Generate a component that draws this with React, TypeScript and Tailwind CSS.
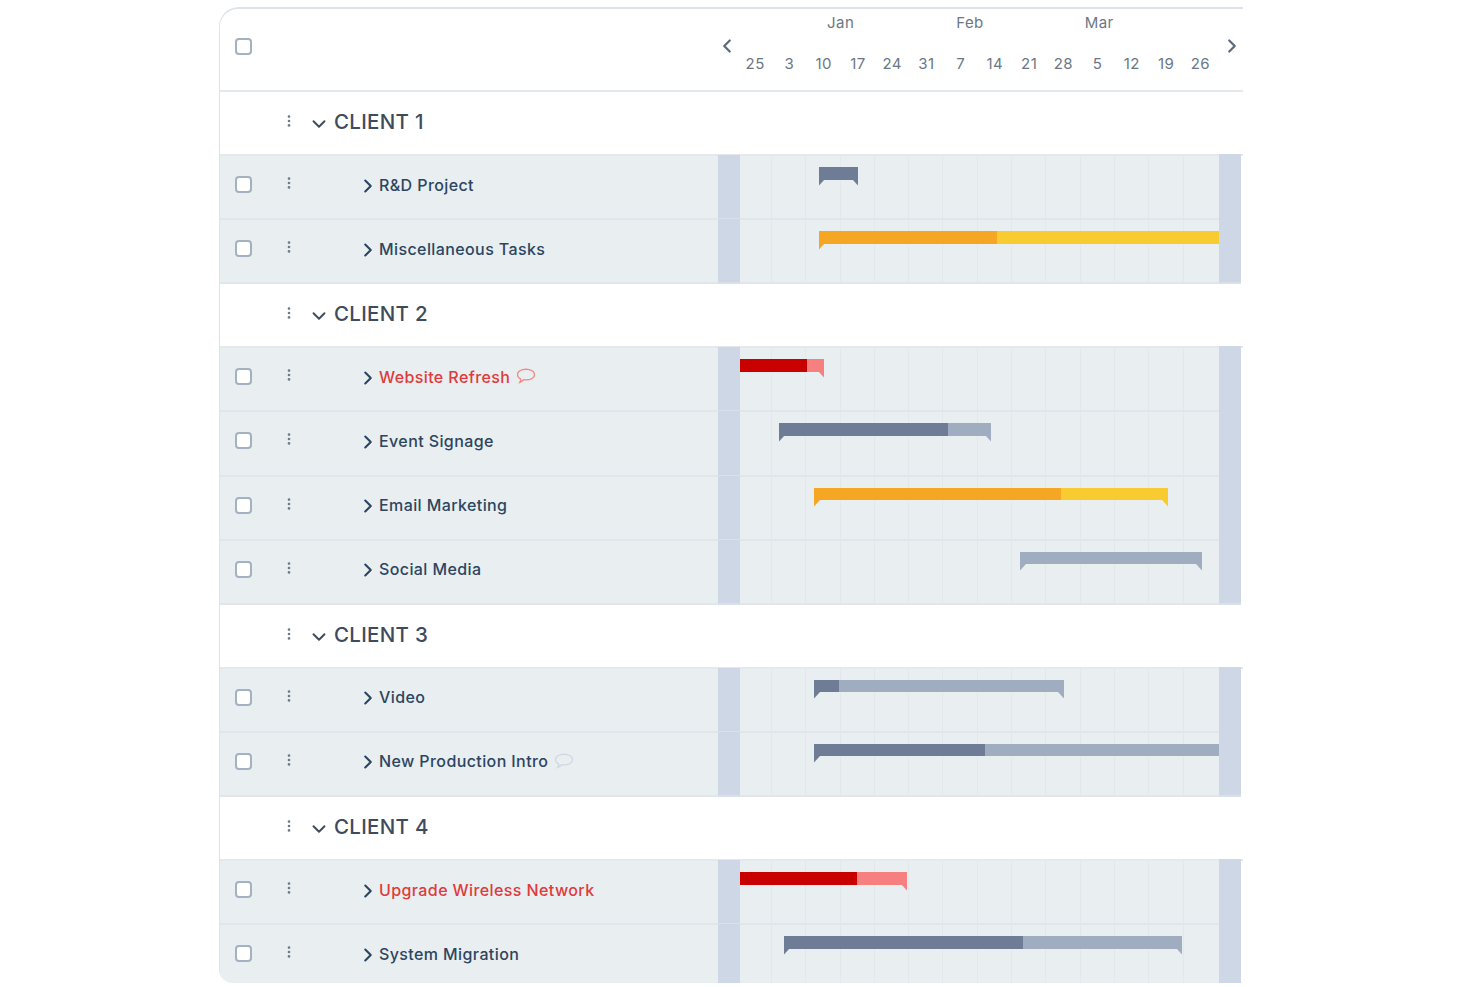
import React from "react";
import { ChevronDown, ChevronLeft, ChevronRight } from "lucide-react";

const DATES = ["25", "3", "10", "17", "24", "31", "7", "14", "21", "28", "5", "12", "19", "26"];
const MONTHS = ["Jan", "Feb", "Mar"];

// timeline column starts at x=740 in the page, segments are page x values
const T0 = 740;

const DARK = "#6e7c96";
const LIGHT = "#a0adc0";
const ORANGE = "#f5a623";
const YELLOW = "#f8cb30";
const RED = "#c80000";
const PINK = "#f67f7f";

interface Segment {
  from: number;
  to: number;
  color: string;
}

interface Task {
  name: string;
  late?: boolean;
  comment?: boolean;
  segments: Segment[];
  tipLeft?: boolean;
  tipRight?: boolean;
}

interface Client {
  name: string;
  tasks: Task[];
}

const CLIENTS: Client[] = [
  {
    name: "CLIENT 1",
    tasks: [
      { name: "R&D Project", segments: [{ from: 819, to: 858, color: DARK }], tipLeft: true, tipRight: true },
      {
        name: "Miscellaneous Tasks",
        segments: [
          { from: 819, to: 997, color: ORANGE },
          { from: 997, to: 1219, color: YELLOW },
        ],
        tipLeft: true,
      },
    ],
  },
  {
    name: "CLIENT 2",
    tasks: [
      {
        name: "Website Refresh",
        late: true,
        comment: true,
        segments: [
          { from: 740, to: 807, color: RED },
          { from: 807, to: 824, color: PINK },
        ],
        tipRight: true,
      },
      {
        name: "Event Signage",
        segments: [
          { from: 779, to: 948, color: DARK },
          { from: 948, to: 991, color: LIGHT },
        ],
        tipLeft: true,
        tipRight: true,
      },
      {
        name: "Email Marketing",
        segments: [
          { from: 814, to: 1061, color: ORANGE },
          { from: 1061, to: 1168, color: YELLOW },
        ],
        tipLeft: true,
        tipRight: true,
      },
      { name: "Social Media", segments: [{ from: 1020, to: 1202, color: LIGHT }], tipLeft: true, tipRight: true },
    ],
  },
  {
    name: "CLIENT 3",
    tasks: [
      {
        name: "Video",
        segments: [
          { from: 814, to: 839, color: DARK },
          { from: 839, to: 1064, color: LIGHT },
        ],
        tipLeft: true,
        tipRight: true,
      },
      {
        name: "New Production Intro",
        comment: true,
        segments: [
          { from: 814, to: 985, color: DARK },
          { from: 985, to: 1219, color: LIGHT },
        ],
        tipLeft: true,
      },
    ],
  },
  {
    name: "CLIENT 4",
    tasks: [
      {
        name: "Upgrade Wireless Network",
        late: true,
        segments: [
          { from: 740, to: 857, color: RED },
          { from: 857, to: 907, color: PINK },
        ],
        tipRight: true,
      },
      {
        name: "System Migration",
        segments: [
          { from: 784, to: 1023, color: DARK },
          { from: 1023, to: 1182, color: LIGHT },
        ],
        tipLeft: true,
        tipRight: true,
      },
    ],
  },
];

const Checkbox = () => (
  <span className="block w-[17px] h-[17px] rounded-[4px] border-2 border-[#a3b1c0] bg-white shrink-0" />
);

const Kebab = () => (
  <svg width="4" height="12" viewBox="0 0 4 12" className="block shrink-0" fill="#6f7b89">
    <circle cx="2" cy="1.6" r="1.3" />
    <circle cx="2" cy="6" r="1.3" />
    <circle cx="2" cy="10.4" r="1.3" />
  </svg>
);

const CommentIcon = ({ color }: { color: string }) => (
  <svg width="18" height="16" viewBox="1 1 16 13" fill="none" stroke={color} strokeWidth="1.2" className="block shrink-0">
    <path d="M9 1.5c4.3 0 7.600 2 7.600 4.800S13.300 11 9 11c-.8 0-1.500-.1-2.200-.2-.9 1-2 1.900-3.300 2.400.5-.9.8-1.900.8-3C2.700 9.300 1.400 7.900 1.400 6.300 1.400 3.500 4.700 1.500 9 1.500z" />
  </svg>
);

const GridLines = () => (
  <div className="absolute inset-0 flex">
    <div className="w-[32px] border-r border-[#e3e8ec] shrink-0" />
    {DATES.slice(1, 13).map((d, i) => (
      <div key={i} className="w-[34.300px] border-r border-[#e3e8ec] shrink-0" />
    ))}
  </div>
);

const Bar = ({ task }: { task: Task }) => {
  const first = task.segments[0];
  const last = task.segments[task.segments.length - 1];
  return (
    <>
      {task.segments.map((s, i) => (
        <div
          key={i}
          className="absolute top-[11px] h-[12.500px]"
          style={{ left: s.from - T0, width: s.to - s.from, backgroundColor: s.color }}
        />
      ))}
      {task.tipLeft && (
        <svg width="6" height="7" viewBox="0 0 6 7" className="absolute top-[23px]" style={{ left: first.from - T0 }}>
          <polygon points="0,0 6,0 0,6.500" fill={first.color} />
        </svg>
      )}
      {task.tipRight && (
        <svg width="6" height="7" viewBox="0 0 6 7" className="absolute top-[23px]" style={{ left: last.to - T0 - 6 }}>
          <polygon points="0,0 6,0 6,6.500" fill={last.color} />
        </svg>
      )}
    </>
  );
};

const ClientRow = ({ name }: { name: string }) => (
  <div className="flex h-[64.100px] bg-white border-b-2 border-[#e4e9ed]">
    <div className="w-[71px] pl-[67px] pt-[23px] shrink-0">
      <Kebab />
    </div>
    <div className="flex items-start pl-[17px] pt-[16px]">
      <ChevronDown size={22} strokeWidth={2.100} className="mt-[5px] text-[#3f4b5b] shrink-0" />
      <span className="ml-[4px] text-[20.500px] leading-[28px] font-medium tracking-[0.3px] text-[#3f4b5b]">
        {name}
      </span>
    </div>
  </div>
);

const TaskRow = ({ task }: { task: Task }) => (
  <div className="flex h-[64.100px] bg-[#e9eef1]">
    <div className="w-[498px] flex shrink-0 border-b-2 border-[#e0e6ec]">
      <div className="pl-[15px] pt-[20px] w-[67px] shrink-0">
        <Checkbox />
      </div>
      <div className="pt-[21px] w-[4px] shrink-0">
        <Kebab />
      </div>
      <div className="flex items-start pl-[66px] pt-[16.500px]">
        <ChevronRight size={22} strokeWidth={2.3} className="mt-[2px] text-[#2c4560] shrink-0" />
        <span
          className={`text-[16px] leading-[24px] font-medium tracking-[0.4px] ${
            task.late ? "text-[#e03a3a]" : "text-[#2c4560]"
          }`}
        >
          {task.name}
        </span>
        {task.comment && (
          <span className="ml-[7px] mt-[3.500px]">
            <CommentIcon color={task.late ? "#f08a85" : "#cfd8e1"} />
          </span>
        )}
      </div>
    </div>
    <div className="w-[22px] -mt-px bg-[#cdd7e6] border-b-2 border-[#d9e0ea] shrink-0" />
    <div className="relative w-[479px] shrink-0 border-b-2 border-[#e0e6ec]">
      <GridLines />
      <Bar task={task} />
    </div>
    <div className="w-[22px] -mt-[2px] bg-[#cdd7e6] border-b-2 border-[#d9e0ea] shrink-0" />
    <div className="bg-white grow" />
  </div>
);

const Header = () => (
  <div className="flex h-[83px] bg-white border-b-2 border-[#e4e9ed]">
    <div className="w-[498px] pl-[15px] pt-[29px] shrink-0">
      <Checkbox />
    </div>
    <div className="w-[19px] shrink-0 pt-[26px]">
      <ChevronLeft size={22} strokeWidth={2.500} className="text-[#5d6b7c] -ml-[2px]" />
    </div>
    <div className="w-[480px] shrink-0 pl-px">
      <div className="flex pl-[38px] pt-[4px] text-[15px] leading-[20px] tracking-[0.4px] text-[#6b7785]">
        {MONTHS.map((m) => (
          <div key={m} className="w-[129.300px] text-center">
            {m}
          </div>
        ))}
      </div>
      <div className="flex pt-[21px] text-[15px] leading-[20px] tracking-[0.4px] text-[#6b7785]">
        {DATES.map((d, i) => (
          <div key={i} className="w-[34.250px] text-center shrink-0">
            {d}
          </div>
        ))}
      </div>
    </div>
    <div className="pl-[4px] pt-[26px]">
      <ChevronRight size={22} strokeWidth={2.500} className="text-[#5d6b7c]" />
    </div>
  </div>
);

export default function App() {
  return (
    <div className="w-[1480px] h-[987px] overflow-hidden bg-white pt-[7px] pl-[219px] font-['Inter',sans-serif]">
      <div className="w-[1024px] h-[976px] overflow-hidden rounded-tl-[20px] rounded-bl-[14px] border-l border-t-2 border-[#dde3e8]">
        <Header />
        {CLIENTS.map((c) => (
          <div key={c.name}>
            <ClientRow name={c.name} />
            {c.tasks.map((t) => (
              <TaskRow key={t.name} task={t} />
            ))}
          </div>
        ))}
      </div>
    </div>
  );
}
